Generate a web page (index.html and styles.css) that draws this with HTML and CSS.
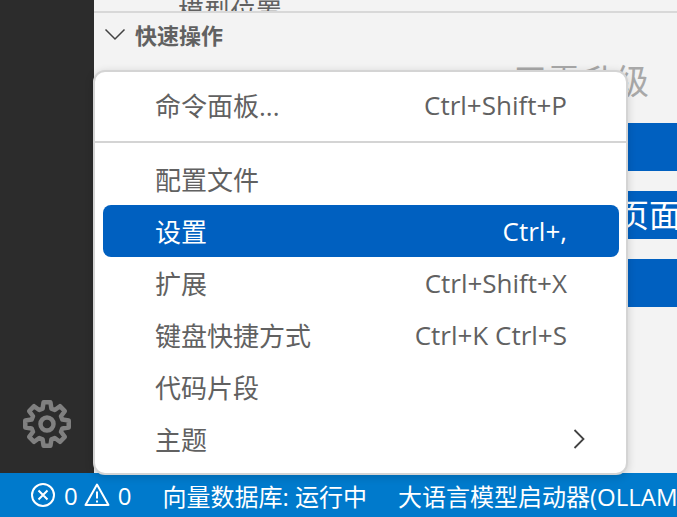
FILE: index.html
```html
<!DOCTYPE html>
<html lang="zh-CN">
<head>
    <meta charset="UTF-8">
    <title>设置菜单</title>
    <link rel="stylesheet" href="styles.css">
</head>
<body>
    <div class="workbench">
        <div class="activitybar">
            <svg class="gear" viewBox="-25 -25 50 50" width="50" height="50">
                <polygon points="-4.41,-15.38 -3.44,-21.73 3.44,-21.73 4.41,-15.38 7.76,-13.99 12.93,-17.8 17.8,-12.93 13.99,-7.76 15.38,-4.41 21.73,-3.44 21.73,3.44 15.38,4.41 13.99,7.76 17.8,12.93 12.93,17.8 7.76,13.99 4.41,15.38 3.44,21.73 -3.44,21.73 -4.41,15.38 -7.76,13.99 -12.93,17.8 -17.8,12.93 -13.99,7.76 -15.38,4.41 -21.73,3.44 -21.73,-3.44 -15.38,-4.41 -13.99,-7.76 -17.8,-12.93 -12.93,-17.8 -7.76,-13.99"/>
                <circle r="6.5"/>
            </svg>
        </div>
        <div class="sidebar">
            <div class="list-clip">
                <div class="list-item">模型位置</div>
            </div>
            <div class="section-head">
                <svg viewBox="0 0 22 13" width="22" height="13"><path d="M1.5 1.5 L11 11 L20.5 1.5"/></svg>
                <span>快速操作</span>
            </div>
            <div class="section-body">
                <div class="upgrade">无需升级</div>
                <div class="actions">
                    <div class="action"></div>
                    <div class="action">打开设置页面</div>
                    <div class="action"></div>
                </div>
            </div>
        </div>
    </div>

    <div class="statusbar">
        <svg class="status-icon" viewBox="0 0 26 26" width="26" height="26">
            <circle cx="13" cy="13" r="11"/>
            <path d="M8.5 8.5 L17.5 17.5 M17.5 8.5 L8.5 17.5"/>
        </svg>
        <span class="count">0</span>
        <svg class="status-icon warn" viewBox="0 0 26 26" width="26" height="26">
            <path d="M13 2.5 L24.5 23 L1.5 23 Z"/>
            <path d="M13 9.5 L13 16.5 M13 18.5 L13 20.5"/>
        </svg>
        <span class="count">0</span>
        <span class="status-text first">向量数据库: 运行中</span>
        <span class="status-text">大语言模型启动器(OLLAMA)</span>
    </div>

    <div class="menu">
        <div class="menu-item"><span>命令面板...</span><span class="keys">Ctrl+Shift+P</span></div>
        <div class="separator"></div>
        <div class="menu-item"><span>配置文件</span></div>
        <div class="menu-item active"><span>设置</span><span class="keys">Ctrl+,</span></div>
        <div class="menu-item"><span>扩展</span><span class="keys">Ctrl+Shift+X</span></div>
        <div class="menu-item"><span>键盘快捷方式</span><span class="keys">Ctrl+K Ctrl+S</span></div>
        <div class="menu-item"><span>代码片段</span></div>
        <div class="menu-item">
            <span>主题</span>
            <svg class="more" viewBox="0 0 12 20" width="12" height="20"><path d="M1.5 1 L10.5 10 L1.5 19"/></svg>
        </div>
    </div>
</body>
</html>
```

FILE: styles.css
```css
* {
    box-sizing: border-box;
}

html, body {
    height: 100%;
}

body {
    margin: 0;
    display: flex;
    flex-direction: column;
    overflow: hidden;
    font-family: "Open Sans", "Noto Sans CJK SC", sans-serif;
    background-color: #f3f3f3;
    color: #616161;
}

.workbench {
    flex: 1;
    display: flex;
    min-height: 0;
}

.activitybar {
    width: 94px;
    flex-shrink: 0;
    display: flex;
    flex-direction: column;
    justify-content: flex-end;
    align-items: center;
    padding-bottom: 24px;
    background-color: #2c2c2c;
}

.gear {
    fill: none;
    stroke: #808080;
    stroke-width: 4.5;
    stroke-linejoin: round;
}

.sidebar {
    flex: 1;
    min-width: 0;
    overflow: hidden;
}

.list-clip {
    height: 13px;
    overflow: hidden;
    padding-left: 84px;
    border-bottom: 2px solid #d8d8d8;
}

.list-item {
    font-size: 26px;
    line-height: 24px;
}

.section-head {
    display: flex;
    align-items: center;
    gap: 9px;
    height: 46px;
    padding: 0 0 4px 10px;
    font-size: 22px;
    font-weight: 700;
}

.section-head svg {
    fill: none;
    stroke: #424242;
    stroke-width: 1.5;
}

.section-body {
    padding-left: 41px;
}

.upgrade {
    height: 64px;
    padding-left: 378px;
    font-size: 34px;
    line-height: 44px;
    color: #a8a8a8;
}

.actions {
    display: flex;
    flex-direction: column;
    gap: 20px;
    width: 600px;
}

.action {
    height: 48px;
    padding-left: 354px;
    font-size: 32px;
    line-height: 48px;
    white-space: nowrap;
    color: #fff;
    background-color: #0060c0;
}

.menu {
    position: absolute;
    left: 93px;
    top: 70px;
    width: 535px;
    height: 405px;
    padding: 7px 7px 7px 8px;
    background-color: #fff;
    border: 2px solid #d4d4d4;
    border-radius: 12px;
    box-shadow: 0 2px 8px rgba(0, 0, 0, 0.16);
}

.menu-item {
    display: flex;
    justify-content: space-between;
    align-items: center;
    height: 52px;
    padding: 0 52px;
    border-radius: 8px;
    font-size: 26px;
}

.menu-item.active {
    color: #fff;
    background-color: #0060c0;
}

.keys {
    font-size: 26px;
}

.separator {
    height: 2px;
    margin: 10px -7px 10px -8px;
    background-color: #d4d4d4;
}

.more {
    margin-right: -18px;
    fill: none;
    stroke: #424242;
    stroke-width: 1.8;
}

.statusbar {
    height: 44px;
    flex-shrink: 0;
    display: flex;
    align-items: center;
    padding-left: 30px;
    white-space: nowrap;
    overflow: hidden;
    font-size: 24px;
    color: #fff;
    background-color: #007acc;
}

.status-icon {
    flex-shrink: 0;
    fill: none;
    stroke: #fff;
    stroke-width: 2;
}

.status-icon.warn {
    margin-left: 6px;
    stroke-linejoin: round;
}

.count {
    margin-left: 8px;
}

.status-text {
    margin-left: 31px;
    flex-shrink: 0;
}

.status-text.first {
    margin-left: 31px;
}
```
